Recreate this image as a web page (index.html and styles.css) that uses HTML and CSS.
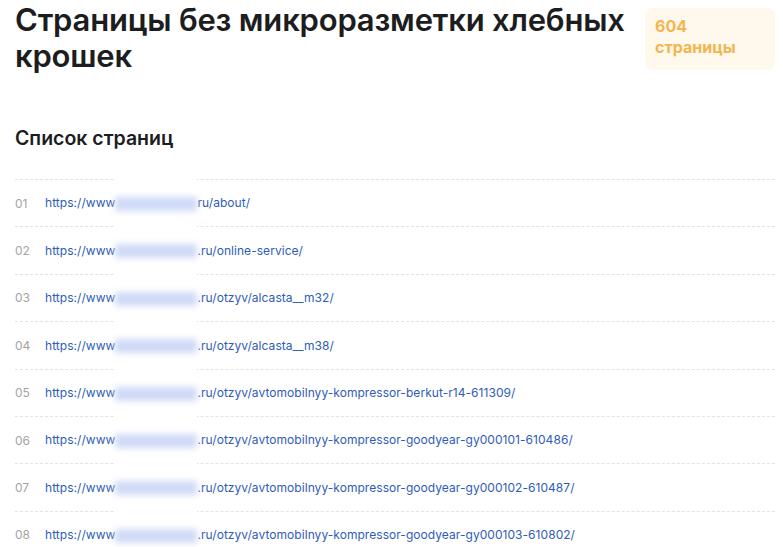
FILE: index.html
```html
<!DOCTYPE html>
<html lang="ru">
<head>
  <meta charset="UTF-8">
  <meta name="viewport" content="width=device-width, initial-scale=1.0">
  <title>Страницы без микроразметки хлебных крошек</title>
  <link rel="stylesheet" href="styles.css">
</head>
<body>
  <header class="page-head">
    <h1>Страницы без микроразметки хлебных крошек</h1>
    <div class="count-badge">604<br>страницы</div>
  </header>

  <h2 class="list-title">Список страниц</h2>

  <ul class="page-list">
    <li><span class="num">01</span><a href="#">https://www<span class="hidden-part"></span>ru/about/</a></li>
    <li><span class="num">02</span><a href="#">https://www<span class="hidden-part"></span>.ru/online-service/</a></li>
    <li><span class="num">03</span><a href="#">https://www<span class="hidden-part"></span>.ru/otzyv/alcasta__m32/</a></li>
    <li><span class="num">04</span><a href="#">https://www<span class="hidden-part"></span>.ru/otzyv/alcasta__m38/</a></li>
    <li><span class="num">05</span><a href="#">https://www<span class="hidden-part"></span>.ru/otzyv/avtomobilnyy-kompressor-berkut-r14-611309/</a></li>
    <li><span class="num">06</span><a href="#">https://www<span class="hidden-part"></span>.ru/otzyv/avtomobilnyy-kompressor-goodyear-gy000101-610486/</a></li>
    <li><span class="num">07</span><a href="#">https://www<span class="hidden-part"></span>.ru/otzyv/avtomobilnyy-kompressor-goodyear-gy000102-610487/</a></li>
    <li><span class="num">08</span><a href="#">https://www<span class="hidden-part"></span>.ru/otzyv/avtomobilnyy-kompressor-goodyear-gy000103-610802/</a></li>
  </ul>
</body>
</html>
```

FILE: styles.css
```css
body {
  margin: 0;
  padding: 0 8px 0 15px;
  font-family: Inter, "Noto Sans", sans-serif;
  color: #1d1d1f;
  background: #fff;
  overflow: hidden;
}
.page-head {
  display: flex;
  align-items: flex-start;
  gap: 16px;
  padding-top: 2px;
}
.page-head h1 {
  margin: 0;
  font-size: 31px;
  line-height: 36px;
  font-weight: 600;
  letter-spacing: -0.2px;
  flex: 1;
}
.count-badge {
  margin-top: 6px;
  width: 110px;
  padding: 8px 10px 12px;
  background-color: #fff8ec;
  border-radius: 8px;
  color: #f2b650;
  font-size: 16px;
  line-height: 21px;
  font-weight: 700;
}
.list-title {
  margin: 52px 0 29px;
  font-size: 19.5px;
  line-height: 24px;
  font-weight: 600;
}
.page-list {
  list-style: none;
  margin: 0;
  padding: 0;
}
.page-list li {
  display: flex;
  align-items: center;
  height: 46.4px;
  border-top: 1px dashed #e2e2e2;
  font-size: 12px;
}
.num {
  width: 30px;
  color: #a3a3a3;
}
.page-list a {
  color: #2f5cb8;
  text-decoration: none;
  letter-spacing: 0.05px;
}
.hidden-part {
  position: relative;
  display: inline-block;
  width: 82px;
  height: 14px;
  vertical-align: middle;
}
.hidden-part::before {
  content: "";
  position: absolute;
  left: 0;
  right: 0;
  top: -18px;
  bottom: -18px;
  background: #fff;
}
.hidden-part::after {
  content: "";
  position: absolute;
  inset: 0;
  background: #cfdaf7;
  filter: blur(3px);
}
```
